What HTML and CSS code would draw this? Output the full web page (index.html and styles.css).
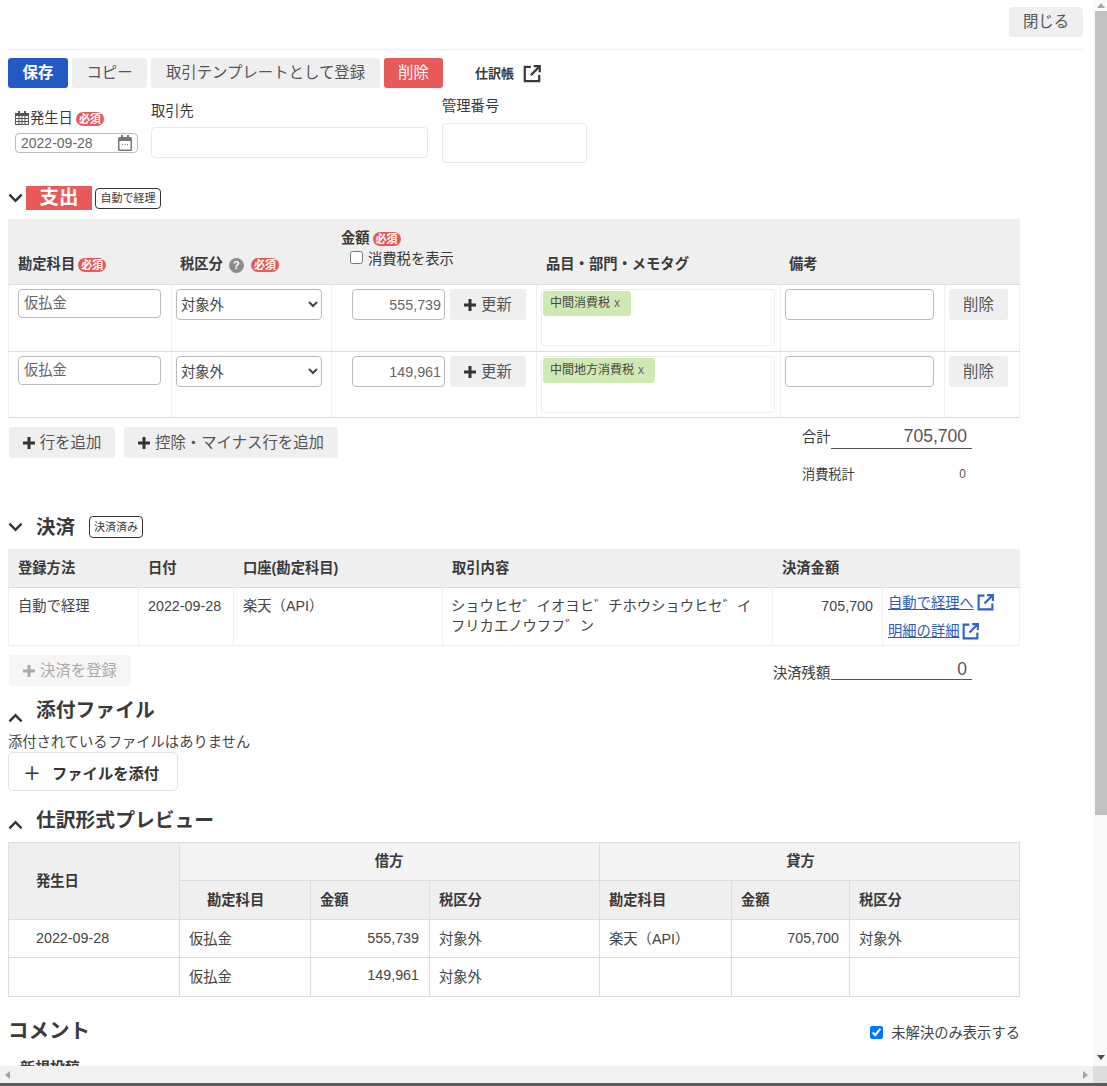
FILE: index.html
```html
<!DOCTYPE html>
<html lang="ja">

<head>
  <meta charset="utf-8">
  <title>取引の詳細</title>
  <link rel="stylesheet" href="styles.css">
</head>

<body>
  <svg class="defs" width="0" height="0">
    <symbol id="ext" viewBox="0 0 18 18">
      <path d="M8 2.500H2.500v13h13V10M10.500 2H16v5.500M16 2L8 10" fill="none" stroke="currentColor" stroke-width="2"/>
    </symbol>
    <symbol id="plus" viewBox="0 0 12 12">
      <path d="M4.500 0h3v4.500H12v3H7.500V12h-3V7.500H0v-3h4.500z" fill="currentColor"/>
    </symbol>
    <symbol id="down" viewBox="0 0 16 10">
      <path d="M1.500 1.500L8 8l6.500-6.500" fill="none" stroke="currentColor" stroke-width="2.600"/>
    </symbol>
    <symbol id="up" viewBox="0 0 16 10">
      <path d="M1.500 8.500L8 2l6.500 6.500" fill="none" stroke="currentColor" stroke-width="2.600"/>
    </symbol>
  </svg>

  <div class="window">
    <div class="window-main">
      <div class="page">

        <div class="close-bar">
          <button class="btn close-btn">閉じる</button>
        </div>

        <div class="toolbar">
          <button class="btn btn-save">保存</button>
          <button class="btn btn-copy">コピー</button>
          <button class="btn btn-template">取引テンプレートとして登録</button>
          <button class="btn btn-delete">削除</button>
          <a class="journal-link">仕訳帳<svg class="ext-icon"><use href="#ext"/></svg></a>
        </div>

        <div class="form-row">
          <div class="field field-date">
            <div class="field-label">
              <svg class="cal-icon" viewBox="0 0 14 14">
                <path d="M3 0h2v2h4V0h2v2h3v12H0V2h3zM1 5v2h2.500V5zm3.500 0v2h2V5zm3 0v2h2V5zm3 0v2H13V5zM1 8v2h2.500V8zm3.500 0v2h2V8zm3 0v2h2V8zm3 0v2H13V8zM1 11v2h2.500v-2zm3.500 0v2h2v-2zm3 0v2h2v-2zm3 0v2H13v-2z" fill="#555" fill-rule="evenodd"/>
              </svg>発生日<span class="required">必須</span>
            </div>
            <div class="date-input">
              <span>2022-09-28</span>
              <svg class="date-icon" viewBox="0 0 14 16">
                <path d="M3 0h2v2h4V0h2v2h1.500A1.500 1.500 0 0 1 14 3.500v11a1.500 1.500 0 0 1-1.500 1.500h-11A1.500 1.500 0 0 1 0 14.500v-11A1.500 1.500 0 0 1 1.500 2H3zM1.500 6v8.500h11V6z" fill="#777" fill-rule="evenodd"/>
                <path d="M4 9h1v1H4zm2.500 0h1v1h-1zM9 9h1v1H9z" fill="#777"/>
              </svg>
            </div>
          </div>
          <div class="field field-partner">
            <div class="field-label">取引先</div>
            <input class="pale-input partner-input" type="text">
          </div>
          <div class="field field-number">
            <div class="field-label">管理番号</div>
            <input class="pale-input number-input" type="text">
          </div>
        </div>

        <div class="section-head head-expense">
          <svg class="chevron"><use href="#down"/></svg>
          <span class="expense-title">支出</span>
          <span class="badge badge-auto">自動で経理</span>
        </div>

        <table class="grid expense-table">
          <colgroup>
            <col class="ec1"><col class="ec2"><col class="ec3"><col class="ec4"><col class="ec5"><col class="ec6">
          </colgroup>
          <thead>
            <tr>
              <th class="first-th">勘定科目<span class="required">必須</span></th>
              <th class="tax-th">税区分<span class="help">?</span><span class="required">必須</span></th>
              <th class="amount-th">
                <div>金額<span class="required">必須</span></div>
                <label class="tax-toggle"><input type="checkbox">消費税を表示</label>
              </th>
              <th class="tag-th">品目・部門・メモタグ</th>
              <th class="note-th">備考</th>
              <th></th>
            </tr>
          </thead>
          <tbody>
            <tr class="row-first">
              <td><input class="account-input" type="text" value="仮払金"></td>
              <td><select class="tax-select"><option>対象外</option></select></td>
              <td>
                <div class="amount-cell">
                  <input class="amount-input" type="text" value="555,739">
                  <button class="btn btn-update"><svg class="plus-icon"><use href="#plus"/></svg>更新</button>
                </div>
              </td>
              <td><div class="tag-box"><span class="tag">中間消費税<i>x</i></span></div></td>
              <td><input class="note-input" type="text"></td>
              <td><button class="btn btn-row-delete">削除</button></td>
            </tr>
            <tr>
              <td><input class="account-input" type="text" value="仮払金"></td>
              <td><select class="tax-select"><option>対象外</option></select></td>
              <td>
                <div class="amount-cell">
                  <input class="amount-input" type="text" value="149,961">
                  <button class="btn btn-update"><svg class="plus-icon"><use href="#plus"/></svg>更新</button>
                </div>
              </td>
              <td><div class="tag-box"><span class="tag">中間地方消費税<i>x</i></span></div></td>
              <td><input class="note-input" type="text"></td>
              <td><button class="btn btn-row-delete">削除</button></td>
            </tr>
          </tbody>
        </table>

        <div class="under-table">
          <div class="add-buttons">
            <button class="btn btn-add add-line"><svg class="plus-icon"><use href="#plus"/></svg>行を追加</button>
            <button class="btn btn-add add-minus"><svg class="plus-icon"><use href="#plus"/></svg>控除・マイナス行を追加</button>
          </div>
          <div class="totals">
            <div class="total-row"><span class="total-name">合計</span><span class="total-value">705,700</span></div>
            <div class="tax-total"><span>消費税計</span><span class="tax-value">0</span></div>
          </div>
        </div>

        <div class="section-head head-payment">
          <svg class="chevron"><use href="#down"/></svg>
          <h2 class="payment-title">決済</h2>
          <span class="badge badge-paid">決済済み</span>
        </div>

        <table class="grid payment-table">
          <colgroup>
            <col class="pc1"><col class="pc2"><col class="pc3"><col class="pc4"><col class="pc5"><col class="pc6">
          </colgroup>
          <thead>
            <tr>
              <th>登録方法</th>
              <th>日付</th>
              <th>口座(勘定科目)</th>
              <th>取引内容</th>
              <th>決済金額</th>
              <th></th>
            </tr>
          </thead>
          <tbody>
            <tr>
              <td>自動で経理</td>
              <td>2022-09-28</td>
              <td>楽天（API）</td>
              <td class="deal-text">ショウヒセ゛イオヨヒ゛チホウショウヒセ゛イ<br>フリカエノウフフ゛ン</td>
              <td class="num">705,700</td>
              <td class="link-cell">
                <a class="blue-link"><u>自動で経理へ</u><svg class="ext-icon"><use href="#ext"/></svg></a>
                <a class="blue-link"><u>明細の詳細</u><svg class="ext-icon"><use href="#ext"/></svg></a>
              </td>
            </tr>
          </tbody>
        </table>

        <div class="under-payment">
          <button class="btn btn-add btn-off"><svg class="plus-icon"><use href="#plus"/></svg>決済を登録</button>
          <div class="total-row balance-row"><span class="balance-name">決済残額</span><span class="total-value">0</span></div>
        </div>

        <div class="section-head head-attach">
          <svg class="chevron"><use href="#up"/></svg>
          <h2 class="section-title">添付ファイル</h2>
        </div>
        <p class="no-files">添付されているファイルはありません</p>
        <button class="attach-btn"><span class="thin-plus">＋</span>ファイルを添付</button>

        <div class="section-head head-preview">
          <svg class="chevron"><use href="#up"/></svg>
          <h2 class="section-title">仕訳形式プレビュー</h2>
        </div>

        <table class="preview-table">
          <colgroup>
            <col class="vc1"><col class="vc2"><col class="vc3"><col class="vc4"><col class="vc5"><col class="vc6"><col class="vc7">
          </colgroup>
          <thead>
            <tr class="side-row">
              <th rowspan="2" class="date-head">発生日</th>
              <th colspan="3" class="side">借方</th>
              <th colspan="3" class="side side-credit">貸方</th>
            </tr>
            <tr class="name-row">
              <th class="debit-account">勘定科目</th>
              <th>金額</th>
              <th>税区分</th>
              <th>勘定科目</th>
              <th>金額</th>
              <th>税区分</th>
            </tr>
          </thead>
          <tbody>
            <tr class="body-row">
              <td class="date-cell">2022-09-28</td>
              <td>仮払金</td>
              <td class="num">555,739</td>
              <td>対象外</td>
              <td>楽天（API）</td>
              <td class="num">705,700</td>
              <td>対象外</td>
            </tr>
            <tr class="body-row-last">
              <td></td>
              <td>仮払金</td>
              <td class="num">149,961</td>
              <td>対象外</td>
              <td></td>
              <td></td>
              <td></td>
            </tr>
          </tbody>
        </table>

        <div class="comment-head">
          <h2 class="comment-title">コメント</h2>
          <label class="unresolved"><input type="checkbox" checked>未解決のみ表示する</label>
        </div>
        <div class="new-post">新規投稿</div>

      </div>

      <div class="vscroll">
        <span class="arrow arrow-up"></span>
        <div class="vthumb"></div>
        <span class="arrow arrow-down"></span>
      </div>
    </div>

    <div class="hscroll">
      <span class="arrow arrow-left"></span>
      <span class="arrow arrow-right"></span>
      <div class="corner"></div>
    </div>
    <div class="window-edge"></div>
  </div>
</body>

</html>
```

FILE: styles.css
```css
* {
  box-sizing: border-box;
}

body {
  margin: 0;
  font-family: "Liberation Sans", "Noto Sans CJK JP", sans-serif;
  font-size: 14.3px;
  color: #3a3a3a;
  background: #fff;
}

.defs {
  position: absolute;
}

button,
input,
select {
  font-family: inherit;
}

/* window and scrollbars */

.window {
  width: 1107px;
  height: 1086px;
  display: flex;
  flex-direction: column;
  overflow: hidden;
}

.window-main {
  flex: 1;
  display: flex;
  min-height: 0;
}

.page {
  width: 1093px;
  padding: 0 10px 0 8px;
  overflow: hidden;
}

.vscroll {
  width: 14px;
  background: #f9f9f9;
  display: flex;
  flex-direction: column;
  align-items: flex-end;
}

.vthumb {
  width: 12px;
  height: 804px;
  margin-top: 3px;
  background: #c1c1c1;
}

.hscroll {
  height: 17px;
  background: #f1f1f1;
  display: flex;
  align-items: center;
  justify-content: space-between;
  padding-left: 5px;
}

.corner {
  width: 14px;
  height: 17px;
  background: #dcdcdc;
  margin-left: 5px;
}

.window-edge {
  height: 3px;
  background: #5b5b5b;
}

.arrow {
  width: 0;
  height: 0;
  display: block;
}

.arrow-up {
  margin: 3px 2px 0 0;
  border: 4px solid transparent;
  border-top: 0;
  border-bottom: 5px solid #a3a3a3;
}

.arrow-down {
  margin: auto 2px 6px 0;
  border: 4px solid transparent;
  border-bottom: 0;
  border-top: 5px solid #505050;
}

.arrow-left {
  border: 4px solid transparent;
  border-left: 0;
  border-right: 5px solid #a3a3a3;
}

.arrow-right {
  margin-left: auto;
  border: 4px solid transparent;
  border-right: 0;
  border-left: 5px solid #a3a3a3;
}

/* buttons */

.btn {
  height: 31px;
  padding: 0 0 4px;
  border: 0;
  border-radius: 3px;
  background: #efefef;
  color: #555;
  font-size: 15.4px;
}

.close-bar {
  height: 50px;
  padding-top: 7px;
  display: flex;
  justify-content: flex-end;
  border-bottom: 1px solid #eee;
}

.close-btn {
  width: 74px;
  height: 30px;
}

.toolbar {
  display: flex;
  align-items: center;
  gap: 4px;
  padding-top: 8px;
  height: 38px;
}

.toolbar .btn {
  height: 30px;
}

.btn-copy {
  width: 75px;
}

.btn-template {
  width: 229px;
}

.toolbar .btn-delete {
  width: 59px;
  color: #fff;
  background: #e85a5a;
}

.toolbar .btn-save {
  width: 60px;
  font-weight: bold;
  color: #fff;
  background: #2359c4;
}

.journal-link {
  display: flex;
  align-items: center;
  margin-left: 28px;
  padding-bottom: 2px;
  font-size: 13px;
  font-weight: bold;
}

.ext-icon {
  width: 19px;
  height: 19px;
}

.journal-link .ext-icon {
  width: 20px;
  height: 20px;
  margin: 3px 0 0 8px;
}

/* slip form */

.form-row {
  display: flex;
  align-items: flex-start;
}

.field-label {
  height: 20px;
  line-height: 20px;
}

.field-date {
  width: 143px;
  padding: 20px 0 0 7px;
}

.cal-icon {
  width: 14px;
  height: 14px;
  margin-right: 1px;
  vertical-align: -2px;
}

.required {
  display: inline-block;
  height: 14px;
  width: 28px;
  margin-left: 3px;
  border-radius: 7px;
  background: #e85a5a;
  color: #fff;
  font-size: 11px;
  font-weight: bold;
  line-height: 14px;
  text-align: center;
}

.date-input {
  display: flex;
  align-items: center;
  justify-content: space-between;
  width: 123px;
  height: 20px;
  margin-top: 5px;
  padding: 0 5px 0 5px;
  border: 1px solid #bbb;
  border-radius: 4px;
  color: #666;
  font-size: 14px;
}

.date-icon {
  width: 14px;
  height: 16px;
}

.field-partner {
  width: 291px;
  padding-top: 13px;
}

.field-number {
  width: 145px;
  padding-top: 8px;
}

.pale-input {
  display: block;
  border: 1px solid #e8e8e8;
  border-radius: 4px;
}

.partner-input {
  width: 277px;
  height: 31px;
  margin-top: 6px;
}

.number-input {
  width: 145px;
  height: 40px;
  margin-top: 7px;
}

/* section headings */

.section-head {
  display: flex;
  align-items: center;
}

.chevron {
  width: 15px;
  height: 10px;
  color: #333;
}

.head-expense {
  height: 24px;
  margin-top: 23px;
}

.expense-title {
  width: 66px;
  height: 24px;
  margin-left: 3px;
  background: #e85a5a;
  color: #fff;
  font-size: 19.5px;
  font-weight: bold;
  line-height: 23px;
  text-align: center;
}

.badge {
  display: block;
  height: 21px;
  border: 1px solid #333;
  border-radius: 4px;
  font-size: 11px;
  line-height: 19px;
  text-align: center;
}

.badge-auto {
  width: 66px;
  margin-left: 3px;
}

.badge-paid {
  width: 54px;
  margin-left: 14px;
  height: 22px;
  line-height: 20px;
}

.head-payment {
  height: 24px;
}

.payment-title {
  margin: 0 0 0 13px;
  font-size: 19.5px;
  line-height: 24px;
}

.section-title {
  margin: 0 0 0 13px;
  font-size: 19.8px;
  line-height: 28px;
}

.head-attach .chevron {
  margin-top: 16px;
}

.head-preview .chevron {
  margin-top: 10px;
}

/* tables */

table {
  width: 1012px;
  table-layout: fixed;
  border-collapse: collapse;
}

.grid th {
  background: #efefef;
  font-weight: bold;
  text-align: left;
  padding: 0 9px;
}

.grid th,
.grid td {
  border: 1px solid #eee;
  border-left-color: #f0f0f0;
  border-right-color: #f0f0f0;
}

.grid {
  border-top: 1px solid #ddd;
  border-bottom: 1px solid #ddd;
}

.expense-table {
  margin-top: 9px;
}

.expense-table thead tr {
  height: 65px;
}

.expense-table thead th {
  vertical-align: bottom;
  padding-bottom: 11px;
  border-bottom-color: #ddd;
  border-left-color: #efefef;
  border-right-color: #efefef;
}

.expense-table tbody tr {
  height: 66px;
}

.expense-table .row-first {
  height: 67px;
}

.expense-table tbody td {
  vertical-align: top;
  padding: 4px 0 0 4px;
  border-bottom-color: #ddd;
}

.ec1 { width: 163px; }
.ec2 { width: 160px; }
.ec3 { width: 205px; }
.ec4 { width: 244px; }
.ec5 { width: 164px; }
.ec6 { width: 75px; }

.help {
  display: inline-block;
  width: 15px;
  height: 15px;
  margin: 0 4px 0 6px;
  border-radius: 50%;
  background: #8c8c8c;
  color: #fff;
  font-size: 11px;
  line-height: 15px;
  text-align: center;
}

.expense-table .tax-th {
  padding-left: 8px;
}

.expense-table .amount-th {
  padding-bottom: 16px;
}

.expense-table .note-th {
  padding-left: 8px;
}

.tax-toggle {
  display: flex;
  align-items: center;
  margin: 0 0 0 9px;
  font-weight: normal;
}

.tax-toggle input {
  width: 13px;
  height: 13px;
  margin: 0 5px 0 0;
}

.expense-table input,
.expense-table select {
  border: 1px solid #bbb;
  border-radius: 4px;
  background: #fff;
  font-size: 14.3px;
  color: #666;
}

.expense-table .account-input {
  display: block;
  width: 143px;
  height: 29px;
  margin: 0 0 0 5px;
  padding: 0 5px 4px;
}

.expense-table .tax-select {
  display: block;
  width: 146px;
  height: 31px;
  color: #444;
}

.amount-cell {
  display: flex;
  gap: 5px;
  padding-left: 16px;
}

.expense-table .amount-input {
  width: 93px;
  height: 31px;
  padding: 0 3px;
  text-align: right;
}

.btn-update {
  width: 76px;
}

.plus-icon {
  width: 12px;
  height: 12px;
  margin-right: 5px;
  color: #333;
  vertical-align: -1px;
}

.tag-box {
  width: 234px;
  height: 57px;
  padding: 1px;
  border: 1px solid #eee;
  border-radius: 4px;
}

.tag {
  display: inline-block;
  height: 25px;
  padding: 0 11px 0 7px;
  border-radius: 3px;
  background: #cfe9b5;
  color: #444;
  font-size: 12px;
  line-height: 24px;
}

.tag i {
  margin-left: 4px;
  font-style: normal;
  color: #666;
}

.expense-table .note-input {
  display: block;
  width: 149px;
  height: 31px;
}

.btn-row-delete {
  display: block;
  width: 59px;
}

.under-table {
  width: 1012px;
  height: 97px;
  display: flex;
  justify-content: space-between;
}

.add-buttons {
  display: flex;
  gap: 9px;
  padding: 9px 0 0 1px;
}

.btn-add {
  height: 31px;
}

.add-line {
  width: 106px;
}

.add-minus {
  width: 214px;
}

.totals {
  width: 218px;
}

.total-row {
  display: flex;
  align-items: flex-end;
  width: 170px;
  height: 31px;
  font-size: 14.3px;
}

.total-name {
  width: 29px;
  padding-bottom: 3px;
}

.total-value {
  width: 141px;
  padding: 0 5px 2px 0;
  border-bottom: 1px solid #555;
  color: #555;
  font-size: 17.5px;
  line-height: 20px;
  text-align: right;
}

.tax-total {
  display: flex;
  align-items: center;
  justify-content: space-between;
  width: 164px;
  margin-top: 15px;
  font-size: 13.2px;
}

.tax-value {
  font-size: 12px;
  color: #555;
}

/* payments */

.payment-table {
  margin-top: 10px;
}

.payment-table thead tr {
  height: 38px;
}

.payment-table thead th {
  padding-bottom: 4px;
  border-bottom-color: #ddd;
  border-left-color: #efefef;
  border-right-color: #efefef;
}

.payment-table tbody tr {
  height: 58px;
}

.payment-table td {
  padding: 8px 9px 0;
  vertical-align: top;
  line-height: 20px;
  color: #444;
}

.payment-table .deal-text {
  padding-left: 8px;
  padding-right: 0;
}

.payment-table .link-cell {
  padding: 0 0 0 5px;
}

.pc1 { width: 130px; }
.pc2 { width: 95px; }
.pc3 { width: 209px; }
.pc4 { width: 330px; }
.pc5 { width: 110px; }
.pc6 { width: 137px; }

.num {
  text-align: right;
}

.blue-link {
  display: flex;
  align-items: center;
  height: 29px;
  color: #2a5cb8;
}

.blue-link + .blue-link {
  height: 28px;
}

.blue-link .ext-icon {
  margin-left: 2px;
  color: #2f62c6;
}

.under-payment {
  width: 1012px;
  height: 50px;
  padding-top: 9px;
  display: flex;
  justify-content: space-between;
}

.btn-off {
  width: 122px;
  margin-left: 1px;
  background: #f6f6f6;
  color: #aaa;
}

.btn-off .plus-icon {
  color: #aaa;
}

.under-payment .balance-row {
  width: 199px;
  height: 25px;
  margin-right: 48px;
}

.balance-row .total-value {
  padding-bottom: 0;
}

.balance-name {
  width: 58px;
  margin-bottom: -2px;
}

.head-attach {
  height: 28px;
}

.no-files {
  margin: 9px 0 0;
  line-height: 18px;
  color: #444;
}

.attach-btn {
  display: block;
  width: 170px;
  height: 39px;
  margin-top: 1px;
  padding: 0 0 0 14px;
  border: 1px solid #e2e2e2;
  border-radius: 5px;
  background: #fff;
  color: #333;
  font-size: 15.3px;
  font-weight: bold;
  text-align: left;
}

.thin-plus {
  display: inline-block;
  width: 29px;
  font-size: 18px;
  font-weight: 500;
  vertical-align: -1px;
}

.head-preview {
  height: 28px;
  margin-top: 15px;
}

/* journal preview */

.preview-table {
  margin-top: 8px;
}

.preview-table th,
.preview-table td {
  border: 1px solid #ddd;
  padding: 0 10px 2px 9px;
  color: #444;
}

.vc1 { width: 171px; }
.vc2 { width: 131px; }
.vc3 { width: 119px; }
.vc4 { width: 170px; }
.vc5 { width: 132px; }
.vc6 { width: 118px; }
.vc7 { width: 170px; }

.side-row {
  height: 38px;
}

.name-row {
  height: 39px;
}

.body-row {
  height: 38px;
}

.body-row-last {
  height: 39px;
}

.preview-table .body-row-last td {
  padding-bottom: 4px;
}

.preview-table th {
  padding-bottom: 4px;
  background: #efefef;
  text-align: left;
  color: #3a3a3a;
}

.preview-table .side {
  background: #f5f4f4;
  text-align: center;
}

.preview-table .side-credit {
  padding-right: 27px;
}

.preview-table .date-head,
.preview-table .date-cell,
.preview-table .debit-account {
  padding-left: 27px;
}

.comment-head {
  display: flex;
  align-items: center;
  justify-content: space-between;
  width: 1012px;
  margin-top: 18px;
}

.comment-title {
  margin: 0;
  font-size: 20.5px;
  line-height: 32px;
}

.unresolved {
  display: flex;
  align-items: center;
  color: #444;
}

.unresolved input {
  width: 13px;
  height: 13px;
  margin: 2px 8px 0 0;
}

.new-post {
  margin: 9px 0 0 12px;
  font-size: 15px;
  font-weight: bold;
}
```
